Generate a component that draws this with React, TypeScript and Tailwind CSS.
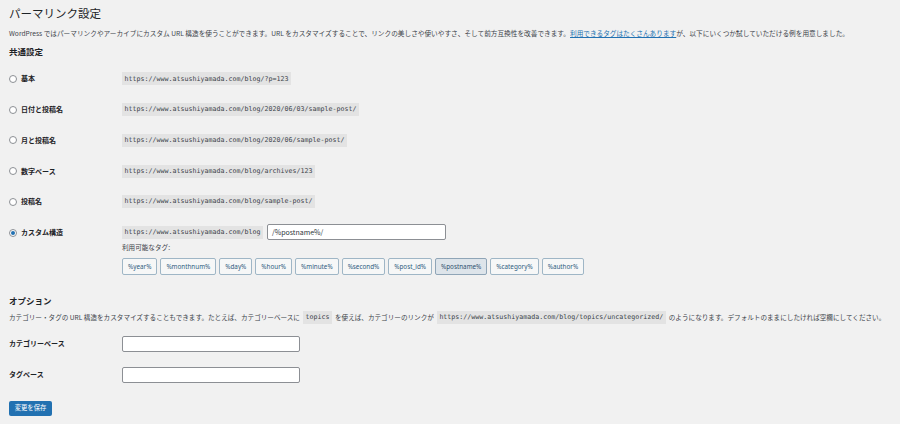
import React from "react";

const font = { fontFamily: '"Noto Sans CJK JP", "Noto Sans", sans-serif' };
const mono = { fontFamily: '"DejaVu Sans Mono", "Liberation Mono", monospace' };

function Code({ children }: { children: React.ReactNode }) {
  return (
    <code
      className="bg-[#e3e3e3] text-[#3c434a] text-[6.65px] px-[2.5px] h-[13px] inline-flex items-center leading-none"
      style={mono}
    >
      {children}
    </code>
  );
}

function Radio({ checked }: { checked?: boolean }) {
  return (
    <span className="w-[8px] h-[8px] rounded-full border border-[#8c8f94] bg-white flex items-center justify-center shrink-0">
      {checked && <span className="w-[4px] h-[4px] rounded-full bg-[#2271b1]" />}
    </span>
  );
}

const rows = [
  ["基本", "https://www.atsushiyamada.com/blog/?p=123"],
  ["日付と投稿名", "https://www.atsushiyamada.com/blog/2020/06/03/sample-post/"],
  ["月と投稿名", "https://www.atsushiyamada.com/blog/2020/06/sample-post/"],
  ["数字ベース", "https://www.atsushiyamada.com/blog/archives/123"],
  ["投稿名", "https://www.atsushiyamada.com/blog/sample-post/"],
];

const tags = [
  "%year%",
  "%monthnum%",
  "%day%",
  "%hour%",
  "%minute%",
  "%second%",
  "%post_id%",
  "%postname%",
  "%category%",
  "%author%",
];

export default function App() {
  return (
    <div
      className="w-[900px] h-[424px] bg-[#f1f1f1] text-[#1d2327] overflow-hidden pl-[9px] flex flex-col"
      style={font}
    >
      <div className="h-[26px] flex items-center text-[11.5px] text-[#1d2327] leading-none pt-[1px]">
        パーマリンク設定
      </div>
      <div className="h-[14px] flex items-center text-[6.67px] text-[#3c434a] whitespace-nowrap leading-none">
        WordPress ではパーマリンクやアーカイブにカスタム URL 構造を使うことができます。URL をカスタマイズすることで、リンクの美しさや使いやすさ、そして前方互換性を改善できます。
        <span className="text-[#2271b1] underline">利用できるタグはたくさんあります</span>
        が、以下にいくつか試していただける例を用意しました。
      </div>
      <div className="mt-[4px] h-[14px] flex items-center text-[8.5px] font-bold leading-none">共通設定</div>

      <div className="mt-[5.6px] flex flex-col">
        {rows.map(([label, url]) => (
          <div key={label} className="h-[30.7px] flex items-center">
            <div className="w-[113px] flex items-center gap-[4px]">
              <Radio />
              <span className="text-[7px] font-bold leading-none">{label}</span>
            </div>
            <Code>{url}</Code>
          </div>
        ))}
        <div className="flex">
          <div className="w-[113px] h-[31px] flex items-center gap-[4px]">
            <Radio checked />
            <span className="text-[7px] font-bold leading-none">カスタム構造</span>
          </div>
          <div className="flex flex-col">
            <div className="mt-[7.4px] h-[16px] flex items-center gap-[4px]">
              <Code>https://www.atsushiyamada.com/blog</Code>
              <div className="w-[179px] h-[16px] bg-white border border-[#8c8f94] rounded-[2px] flex items-center px-[4px] text-[7px] text-[#2c3338] leading-none">
                /%postname%/
              </div>
            </div>
            <div className="mt-[0.8px] h-[12px] flex items-center text-[6.6px] text-[#3c434a] leading-none">
              利用可能なタグ:
            </div>
            <div className="mt-[5px] flex gap-[3px]">
              {tags.map((t) => (
                <div
                  key={t}
                  className={
                    t === "%postname%"
                      ? "h-[17px] px-[5px] flex items-center border border-[#8fa5b7] bg-[#dde4ea] rounded-[2px] text-[6.3px] text-[#2f5170] leading-none"
                      : "h-[17px] px-[5px] flex items-center border border-[#9fb6c6] bg-[#f6f7f7] rounded-[2px] text-[6.3px] text-[#2f5c80] leading-none"
                  }
                  style={{ fontFamily: '"Noto Sans", sans-serif' }}
                >
                  {t}
                </div>
              ))}
            </div>
          </div>
        </div>
      </div>

      <div className="mt-[17.7px] h-[14px] flex items-center text-[8.5px] font-bold leading-none">オプション</div>
      <div className="mt-[4.3px] h-[12px] flex items-center text-[6.6px] text-[#3c434a] whitespace-nowrap leading-none">
        <span>カテゴリー・タグの URL 構造をカスタマイズすることもできます。たとえば、カテゴリーベースに</span>
        <span className="mx-[3px]">
          <Code>topics</Code>
        </span>
        <span>を使えば、カテゴリーのリンクが</span>
        <span className="mx-[3px]">
          <Code>https://www.atsushiyamada.com/blog/topics/uncategorized/</Code>
        </span>
        <span>のようになります。デフォルトのままにしたければ空欄にしてください。</span>
      </div>

      <div className="mt-[12.7px] h-[16px] flex items-center">
        <div className="w-[113px] text-[7px] font-bold leading-none">カテゴリーベース</div>
        <div className="w-[178px] h-[16px] bg-white border border-[#8c8f94] rounded-[2px]" />
      </div>
      <div className="mt-[15px] h-[16px] flex items-center">
        <div className="w-[113px] text-[7px] font-bold leading-none">タグベース</div>
        <div className="w-[178px] h-[16px] bg-white border border-[#8c8f94] rounded-[2px]" />
      </div>

      <div className="mt-[18px]">
        <div className="w-[43px] h-[15px] bg-[#2271b1] rounded-[2px] flex items-center justify-center text-white text-[6.3px] leading-none">
          変更を保存
        </div>
      </div>
    </div>
  );
}
